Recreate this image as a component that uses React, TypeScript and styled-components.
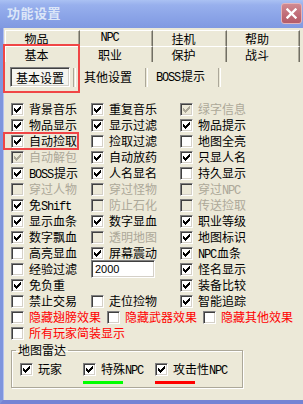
import React from 'react'
import styled, { createGlobalStyle } from 'styled-components'

type Cell =
  | { label: string; checked?: boolean; disabled?: boolean }
  | { input: string }
  | null

const GRID: Cell[][] = [
  [{ label: '背景音乐', checked: true }, { label: '重复音乐', checked: true }, { label: '绿字信息', checked: true, disabled: true }],
  [{ label: '物品显示', checked: true }, { label: '显示过滤', checked: true }, { label: '物品提示', checked: true }],
  [{ label: '自动捡取', checked: true }, { label: '捡取过滤' }, { label: '地图全亮' }],
  [{ label: '自动解包', checked: true, disabled: true }, { label: '自动放药', checked: true }, { label: '只显人名', checked: true }],
  [{ label: 'BOSS提示', checked: true }, { label: '人名显名', checked: true }, { label: '持久显示' }],
  [{ label: '穿过人物', disabled: true }, { label: '穿过怪物', disabled: true }, { label: '穿过NPC', disabled: true }],
  [{ label: '免Shift', checked: true }, { label: '防止石化', disabled: true }, { label: '传送捡取', disabled: true }],
  [{ label: '显示血条', checked: true }, { label: '数字显血', checked: true }, { label: '职业等级', checked: true }],
  [{ label: '数字飘血', checked: true }, { label: '透明地图', disabled: true }, { label: '地图标识', checked: true }],
  [{ label: '高亮显血' }, { label: '屏幕震动', checked: true }, { label: 'NPC血条', checked: true }],
  [{ label: '经验过滤' }, { input: '2000' }, { label: '怪名显示', checked: true }],
  [{ label: '免负重', checked: true }, null, { label: '装备比较', checked: true }],
  [{ label: '禁止交易' }, { label: '走位捡物' }, { label: '智能追踪', checked: true }],
]

const TABS_BACK = ['物品', 'NPC', '挂机', '帮助']
const TABS_FRONT = ['基本', '职业', '保护', '战斗']
const TAB_WIDTHS = [75, 73, 74, 73]

// latin runs are drawn narrower, like the bitmap font of the original
const Text: React.FC<{ children: string }> = ({ children }) => (
  <>
    {children.split(/([A-Za-z]+)/).map((part, i) =>
      /^[A-Za-z]+$/.test(part) ? <Lat key={i}>{part}</Lat> : part
    )}
  </>
)

const Tick: React.FC<{ color: string }> = ({ color }) => (
  <svg width="7" height="7" viewBox="0 0 7 7" shapeRendering="crispEdges">
    <path
      fill={color}
      d="M6 0h1v1H6z M5 1h2v1H5z M0 2h1v1H0z M4 2h3v1H4z M0 3h2v1H0z M3 3h3v1H3z M0 4h5v1H0z M1 5h3v1H1z M2 6h1v1H2z"
    />
  </svg>
)

const CheckItem: React.FC<{ label: string; checked?: boolean; disabled?: boolean; red?: boolean }> = ({
  label,
  checked,
  disabled,
  red,
}) => (
  <Item>
    <Box $disabled={disabled}>{checked && <Tick color={disabled ? '#aca899' : '#000'} />}</Box>
    <Label $disabled={disabled} $red={red}>
      <Text>{label}</Text>
    </Label>
  </Item>
)

const App: React.FC = () => (
  <>
    <GlobalStyle />
    <Window>
      <TitleBar>
        <Title>功能设置</Title>
        <CloseButton>
          <svg width="11" height="11" viewBox="0 0 11 11">
            <path d="M1.5 1.5 L9.5 9.5 M9.5 1.5 L1.5 9.5" stroke="#fff" strokeWidth="2.4" strokeLinecap="square" />
          </svg>
        </CloseButton>
      </TitleBar>
      <Body>
        <TabStrip>
          <TabRow>
            {TABS_BACK.map((t, i) => (
              <Tab key={t} $first={i === 0} style={{ width: TAB_WIDTHS[i] }}>
                <Text>{t}</Text>
              </Tab>
            ))}
          </TabRow>
          <TabRow>
            {TABS_FRONT.map((t, i) => (
              <Tab key={t} $first={i === 0} style={{ width: TAB_WIDTHS[i] }}>
                {t}
              </Tab>
            ))}
          </TabRow>
        </TabStrip>
        <SubTabs>
          <PressedButton>基本设置</PressedButton>
          <Separator />
          <SubTab>其他设置</SubTab>
          <Separator />
          <SubTab>
            <Text>BOSS提示</Text>
          </SubTab>
          <Separator />
        </SubTabs>
        <Grid>
          {GRID.flatMap((row, r) =>
            row.map((cell, c) => {
              const key = `${r}-${c}`
              if (!cell) return <span key={key} />
              if ('input' in cell) return <Field key={key}>{cell.input}</Field>
              return <CheckItem key={key} {...cell} />
            })
          )}
        </Grid>
        <FlowRow>
          <CheckItem label="隐藏翅膀效果" red />
          <CheckItem label="隐藏武器效果" red />
          <CheckItem label="隐藏其他效果" red />
        </FlowRow>
        <FlowRow>
          <CheckItem label="所有玩家简装显示" red />
        </FlowRow>
        <Group>
          <Legend>地图雷达</Legend>
          <RadarGrid>
            <RadarCell>
              <CheckItem label="玩家" checked />
            </RadarCell>
            <RadarCell>
              <CheckItem label="特殊NPC" checked />
              <Bar $color="#00ff00" />
            </RadarCell>
            <RadarCell>
              <CheckItem label="攻击性NPC" checked />
              <Bar $color="#ff0000" />
            </RadarCell>
          </RadarGrid>
        </Group>
      </Body>
      <Mark style={{ left: 3, top: 44, width: 77, height: 49 }} />
      <Mark style={{ left: 3, top: 132, width: 76, height: 18 }} />
    </Window>
  </>
)
export default App

const GlobalStyle = createGlobalStyle`
  html, body {
    margin: 0;
    padding: 0;
    background: #ece9d8;
  }
  body {
    font-family: "Noto Sans CJK SC", sans-serif;
    font-size: 12px;
    color: #000;
  }
`
const Window = styled.div`
  position: relative;
  width: 303px;
  height: 404px;
  display: flex;
  flex-direction: column;
  overflow: hidden;
  background: #ece9d8;
`
const TitleBar = styled.div`
  height: 28px;
  flex-shrink: 0;
  display: flex;
  align-items: flex-start;
  justify-content: space-between;
  padding: 0 1px 0 7px;
  box-sizing: border-box;
  background: linear-gradient(to bottom, #aac1f3 0%, #98b0ed 18%, #8ca5e8 55%, #8099e1 100%);
`
const Title = styled.div`
  margin-top: 5px;
  font-size: 13px;
  font-weight: bold;
  letter-spacing: 0.5px;
  line-height: 16px;
  color: #dce6f8;
`
const CloseButton = styled.div`
  margin-top: 3px;
  width: 21px;
  height: 21px;
  box-sizing: border-box;
  display: flex;
  align-items: center;
  justify-content: center;
  border: 1px solid #e2b4ba;
  border-radius: 3px;
  background: linear-gradient(to bottom, #d08a92, #bf6a75 60%, #b45c68);
`
const Body = styled.div`
  flex: 1;
  display: flex;
  flex-direction: column;
  border-left: 3px solid #7f95dd;
  border-bottom: 4px solid #7484d4;
  box-shadow: inset 1px 0 #b3c1ef;
  padding: 2px 0 0 2px;
`
const TabStrip = styled.div`
  display: flex;
  flex-direction: column;
`
const TabRow = styled.div`
  display: flex;
  height: 16px;
`
const Tab = styled.div<{ $first?: boolean }>`
  box-sizing: border-box;
  display: flex;
  align-items: center;
  justify-content: center;
  padding-right: 12px;
  border-top: 1px solid #fff;
  border-left: ${(p) => (p.$first ? '1px solid #fff' : 'none')};
  border-right: 1px solid #716f64;
  box-shadow: inset -1px 0 #aca899;
  line-height: 15px;
`
const SubTabs = styled.div`
  display: flex;
  align-items: center;
  height: 20px;
  margin-top: 5px;
  padding-left: 5px;
`
const PressedButton = styled.div`
  width: 60px;
  height: 20px;
  box-sizing: border-box;
  display: flex;
  align-items: center;
  justify-content: center;
  border-top: 1px solid #808080;
  border-left: 1px solid #808080;
  border-right: 1px solid #fff;
  border-bottom: 1px solid #fff;
  box-shadow: inset 1px 1px #404040, inset -1px -1px #d4d0c8;
  background: #f6f5f0;
  padding-top: 1px;
`
const Separator = styled.div`
  width: 1px;
  height: 19px;
  margin-left: 3px;
  border-left: 1px solid #aca899;
  border-right: 1px solid #fff;
`
const SubTab = styled.div`
  padding: 0 10px 0 8px;
  line-height: 20px;
`
const Grid = styled.div`
  display: grid;
  grid-template-columns: 80px 89px 1fr;
  grid-auto-rows: 16px;
  margin-top: 14px;
  padding-left: 6px;
`
const Item = styled.div`
  display: flex;
  align-items: center;
  height: 16px;
  white-space: nowrap;
`
const Box = styled.div<{ $disabled?: boolean }>`
  width: 13px;
  height: 13px;
  flex-shrink: 0;
  box-sizing: border-box;
  display: flex;
  align-items: center;
  justify-content: center;
  margin-right: 5px;
  border-top: 1px solid #808080;
  border-left: 1px solid #808080;
  border-right: 1px solid #fff;
  border-bottom: 1px solid #fff;
  box-shadow: inset 1px 1px #404040, inset -1px -1px #d4d0c8;
  background: ${(p) => (p.$disabled ? '#ece9d8' : '#fff')};
`
const Label = styled.span<{ $disabled?: boolean; $red?: boolean }>`
  display: block;
  height: 16px;
  line-height: 16px;
  color: ${(p) => (p.$disabled ? '#aca899' : p.$red ? '#ff0000' : '#000')};
`
const Lat = styled.span`
  font-family: "Liberation Mono", monospace;
  font-size: 12px;
  letter-spacing: -1.2px;
  margin-right: 1px;
`
const Field = styled.div`
  align-self: center;
  width: 64px;
  height: 18px;
  box-sizing: border-box;
  padding: 0 3px;
  font-family: "Liberation Sans", sans-serif;
  font-size: 11px;
  line-height: 16px;
  background: #fff;
  border-top: 1px solid #808080;
  border-left: 1px solid #808080;
  border-right: 1px solid #fff;
  border-bottom: 1px solid #fff;
  box-shadow: inset 1px 1px #404040, inset -1px -1px #d4d0c8;
`
const FlowRow = styled.div`
  display: flex;
  gap: 6px;
  padding-left: 6px;
`
const Group = styled.fieldset`
  margin: 1px 0 0 6px;
  width: 232px;
  box-sizing: border-box;
  min-width: 0;
  padding: 3px 8px 3px;
  border: 1px solid #aca899;
  box-shadow: 1px 1px 0 #fff, inset 1px 1px 0 #fff;
`
const Legend = styled.legend`
  margin-left: -4px;
  padding: 0 2px;
  line-height: 16px;
`
const RadarGrid = styled.div`
  display: grid;
  grid-template-columns: 63px 72px auto;
`
const RadarCell = styled.div`
  display: flex;
  flex-direction: column;
`
const Bar = styled.div<{ $color: string }>`
  width: 40px;
  height: 3px;
  margin-top: 4px;
  background: ${(p) => p.$color};
`
const Mark = styled.div`
  position: absolute;
  box-sizing: border-box;
  border: 2px solid #f04646;
  pointer-events: none;
`
